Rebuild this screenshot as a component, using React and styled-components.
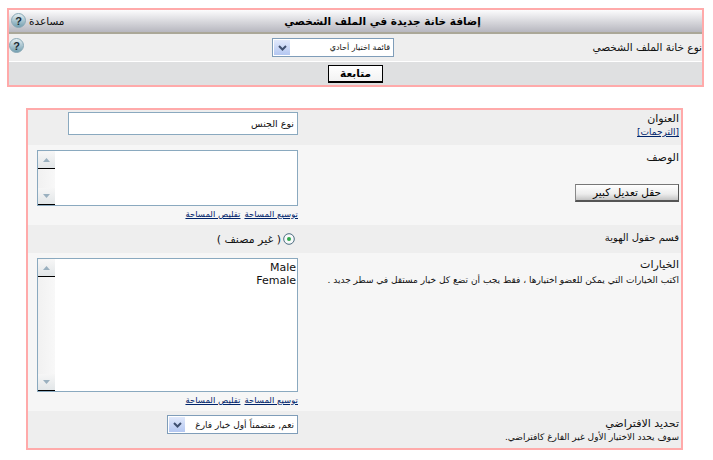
import React from "react";
import styled, { createGlobalStyle } from "styled-components";

const Global = createGlobalStyle`
  html, body { margin: 0; padding: 0; background: #fff; }
  body { font-family: "DejaVu Sans", "Liberation Sans", sans-serif; font-size: 11px; color: #111; }
`;
const Page = styled.div`
  direction: rtl;
  width: 713px;
  height: 460px;
  overflow: hidden;
  padding: 8px 9px 0 7px;
  box-sizing: border-box;
`;
const Box = styled.section`
  border: 2px solid #ffaaaa;
  box-sizing: border-box;
`;
const FormBox = styled(Box)`
  margin: 21px 21px 0 19px;
  height: 342px;
`;
const TitleBar = styled.header`
  display: flex;
  align-items: center;
  height: 22px;
  background: linear-gradient(#fcfcfd, #dddde1 45%, #b7b7bf);
  border-bottom: 2px solid #aaa798;
  position: relative;
`;
const Title = styled.h1`
  margin: 0 auto;
  padding-left: 54px;
  font-size: 10.5px;
  font-weight: bold;
  color: #000;
`;
const HelpLink = styled.div`
  display: flex;
  align-items: center;
  gap: 3px;
  font-size: 10.5px;
  position: absolute;
  left: 2px;
  top: 3px;
`;
const TopRow = styled.div`
  display: grid;
  grid-template-columns: 308px 122px 1fr;
  height: 27px;
  background: #eeeeee;
  border-bottom: 1px solid #fff;
`;
const TopLabel = styled.div`
  font-size: 10.5px;
  line-height: 14px;
  padding-top: 6px;
  white-space: nowrap;
`;
const SelectCell = styled.div`
  padding-top: 4px;
`;
const HelpCell = styled.div`
  padding-top: 4px;
  display: flex;
  justify-content: flex-end;
`;
const Footer = styled.div`
  display: flex;
  justify-content: center;
  align-items: center;
  height: 23px;
  background: #dfe0e1;
`;
const SubmitButton = styled.button`
  width: 55px;
  height: 18px;
  padding: 0;
  font: bold 10.5px "DejaVu Sans", sans-serif;
  color: #000;
  background: linear-gradient(#fff, #f2f2f2);
  border: 1px solid #000;
  border-bottom-width: 2px;
`;
const Row = styled.div`
  display: grid;
  grid-template-columns: 1fr 274px;
  height: ${(p) => p.$h}px;
  background: ${(p) => (p.$alt ? "#f6f6f6" : "#eeeeee")};
`;
const LabelCell = styled.div`
  padding: ${(p) => p.$top ?? 3}px 2px 0 0;
`;
const Label = styled.div`
  font-size: ${(p) => p.$size ?? 11}px;
  line-height: 15px;
  white-space: nowrap;
`;
const Hint = styled.div`
  font-size: 9px;
  line-height: 13px;
  white-space: nowrap;
  margin-top: ${(p) => p.$gap ?? 0}px;
`;
const TextLink = styled.a`
  display: block;
  color: #00246b;
  text-decoration: underline;
  font-size: ${(p) => p.$size ?? 10}px;
  line-height: 13px;
  white-space: nowrap;
`;
const ValueCell = styled.div`
  padding: ${(p) => p.$top ?? 3}px 4px 0 0;
`;
const TitleInput = styled.div`
  width: 230px;
  height: 23px;
  box-sizing: border-box;
  border: 1px solid #8aa9bf;
  background: #fff;
  font-size: 9.5px;
  line-height: 21px;
  padding-right: 3px;
`;
const SelectBox = styled.div`
  display: flex;
  align-items: center;
  justify-content: space-between;
  width: ${(p) => p.$w}px;
  height: 19px;
  box-sizing: border-box;
  border: 1px solid #7f9db9;
  background: #fff;
  font-size: ${(p) => p.$size}px;
  padding: 0 ${(p) => p.$pad}px 0 1px;
  white-space: nowrap;
`;
const SelectArrow = styled.span`
  display: flex;
  align-items: center;
  justify-content: center;
  width: 16px;
  height: 15px;
  background: linear-gradient(#e1e9fb, #b4c7f1);
  flex: none;
`;
const TextArea = styled.div`
  direction: ltr;
  display: flex;
  width: 261px;
  height: ${(p) => p.$h}px;
  box-sizing: border-box;
  border: 1px solid #8aa9bf;
  background: #fff;
`;
const Scrollbar = styled.div`
  display: flex;
  flex-direction: column;
  justify-content: space-between;
  width: 17px;
  padding-top: 1px;
  box-sizing: border-box;
  background: linear-gradient(90deg, #f1f1f1, #f8f8f8);
  flex: none;
`;
const ScrollButton = styled.div`
  display: flex;
  align-items: center;
  justify-content: center;
  height: 16px;
  background: linear-gradient(#f6f6f6, #e2e6e8);
  border-bottom: 1px solid #000;
`;
const Options = styled.div`
  flex: 1;
  text-align: right;
  font: 11px/13px "DejaVu Sans", sans-serif;
  padding: 2px 1px 0 0;
  color: #111;
`;
const Links = styled.div`
  display: flex;
  gap: 4px;
  padding-top: 2px;
`;
const RadioRow = styled.div`
  display: flex;
  align-items: center;
  gap: 2px;
  height: 28px;
  padding-right: 3px;
  font-size: 11px;
`;
const BigButton = styled.button`
  display: block;
  width: 104px;
  height: 18px;
  padding: 0 0 1px;
  margin-top: 19px;
  font: 10.5px "DejaVu Sans", sans-serif;
  color: #000;
  background: linear-gradient(#fff, #ececec 60%, #c4c4c4);
  border: 1px solid #555;
  border-top-color: #777;
  border-left-color: #888;
  border-bottom-width: 2px;
`;

const Help = () => (
  <svg width="15" height="15" viewBox="0 0 15 15">
    <defs>
      <linearGradient id="hg" x1="0" y1="0" x2="0" y2="1">
        <stop offset="0" stopColor="#e8f0f3" />
        <stop offset="1" stopColor="#6f9cae" />
      </linearGradient>
    </defs>
    <circle cx="7.5" cy="7.5" r="7" fill="url(#hg)" stroke="#8aa9b6" />
    <text x="7.5" y="11.5" fontSize="11" fontWeight="bold" textAnchor="middle" fill="#1b2a33" fontFamily="Liberation Sans">?</text>
  </svg>
);
const Chevron = () => (
  <svg width="9" height="6" viewBox="0 0 9 6">
    <path d="M1 1l3.5 3.5L8 1" fill="none" stroke="#3f5070" strokeWidth="2" />
  </svg>
);
const Tri = ({ down }) => (
  <svg width="7" height="4" viewBox="0 0 7 4">
    <path d={down ? "M0 0h7L3.5 4z" : "M0 4h7L3.5 0z"} fill="#9ab0bf" />
  </svg>
);
const Radio = () => (
  <svg width="12" height="12" viewBox="0 0 12 12">
    <circle cx="6" cy="6" r="5.3" fill="#f7f9fa" stroke="#4c6c80" />
    <circle cx="6" cy="6" r="2" fill="#2fa84a" />
  </svg>
);
const Area = ({ h, children }) => (
  <TextArea $h={h}>
    <Scrollbar>
      <ScrollButton><Tri /></ScrollButton>
      <ScrollButton><Tri down /></ScrollButton>
    </Scrollbar>
    <Options>{children}</Options>
  </TextArea>
);
const ResizeLinks = () => (
  <Links>
    <TextLink $size={8.5}>توسيع المساحة</TextLink>
    <TextLink $size={8.5}>تقليص المساحة</TextLink>
  </Links>
);

export default function App() {
  return (
    <Page>
      <Global />
      <Box>
        <TitleBar>
          <Title>إضافة خانة جديدة في الملف الشخصي</Title>
          <HelpLink>
            <span>مساعدة</span>
            <Help />
          </HelpLink>
        </TitleBar>
        <TopRow>
          <TopLabel>نوع خانة الملف الشخصي</TopLabel>
          <SelectCell>
            <SelectBox $w={122} $size={8} $pad={3}>
              <span>قائمة اختيار أحادي</span>
              <SelectArrow><Chevron /></SelectArrow>
            </SelectBox>
          </SelectCell>
          <HelpCell><Help /></HelpCell>
        </TopRow>
        <Footer>
          <SubmitButton>متابعة</SubmitButton>
        </Footer>
      </Box>
      <FormBox>
        <Row $h={35}>
          <LabelCell $top={1}>
            <Label>العنوان</Label>
            <TextLink $size={9}>[الترجمات]</TextLink>
          </LabelCell>
          <ValueCell $top={2}><TitleInput>نوع الجنس</TitleInput></ValueCell>
        </Row>
        <Row $h={80} $alt>
          <LabelCell $top={5}>
            <Label>الوصف</Label>
            <BigButton>حقل تعديل كبير</BigButton>
          </LabelCell>
          <ValueCell $top={5}>
            <Area h={56} />
            <ResizeLinks />
          </ValueCell>
        </Row>
        <Row $h={28}>
          <LabelCell $top={5}><Label $size={10}>قسم حقول الهوية</Label></LabelCell>
          <ValueCell $top={0}>
            <RadioRow>
              <Radio />
              <span>( غير مصنف )</span>
            </RadioRow>
          </ValueCell>
        </Row>
        <Row $h={158} $alt>
          <LabelCell $top={4}>
            <Label>الخيارات</Label>
            <Hint $gap={2}>اكتب الخيارات التي يمكن للعضو اختيارها ، فقط يجب أن تضع كل خيار مستقل في سطر جديد .</Hint>
          </LabelCell>
          <ValueCell $top={5}>
            <Area h={134}>
              Male<br />Female
            </Area>
            <ResizeLinks />
          </ValueCell>
        </Row>
        <Row $h={37}>
          <LabelCell $top={5}>
            <Label>تحديد الافتراضي</Label>
            <Hint>سوف يحدد الاختيار الأول غير الفارغ كافتراضي.</Hint>
          </LabelCell>
          <ValueCell $top={4}>
            <SelectBox $w={131} $size={9} $pad={3}>
              <span>نعم, متضمناً أول خيار فارغ</span>
              <SelectArrow><Chevron /></SelectArrow>
            </SelectBox>
          </ValueCell>
        </Row>
      </FormBox>
    </Page>
  );
}
